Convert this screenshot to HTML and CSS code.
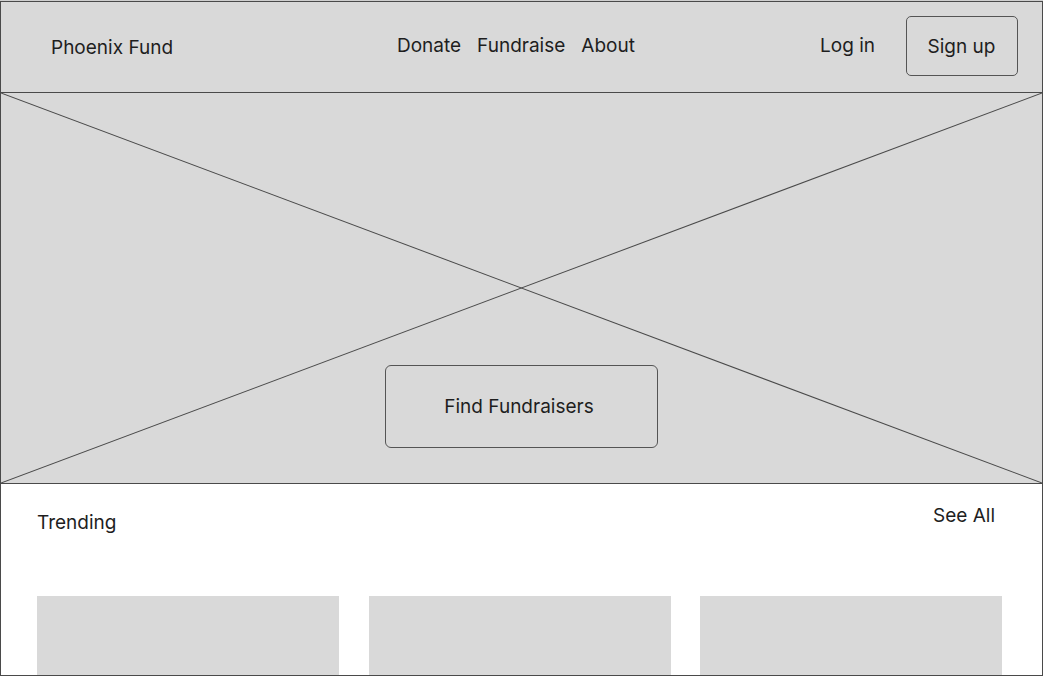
FILE: index.html
```html
<!DOCTYPE html>
<html lang="en">
<head>
<meta charset="utf-8">
<title>Phoenix Fund</title>
<link rel="stylesheet" href="styles.css">
</head>
<body>
<div class="frame">
  <header class="topbar">
    <div class="logo">Phoenix Fund</div>
    <nav class="nav">
      <a class="nav-link" href="#">Donate</a>
      <a class="nav-link" href="#">Fundraise</a>
      <a class="nav-link" href="#">About</a>
    </nav>
    <div class="auth">
      <a class="login" href="#">Log in</a>
      <a class="signup" href="#">Sign up</a>
    </div>
  </header>
  <section class="hero">
    <svg class="hero-x" viewBox="0 0 100 100" preserveAspectRatio="none" aria-hidden="true">
      <line x1="0" y1="0" x2="100" y2="100" vector-effect="non-scaling-stroke"/>
      <line x1="100" y1="0" x2="0" y2="100" vector-effect="non-scaling-stroke"/>
    </svg>
    <a class="hero-btn" href="#">Find Fundraisers</a>
  </section>
  <section class="trending">
    <div class="trending-head">
      <h2 class="trending-title">Trending</h2>
      <a class="see-all" href="#">See All</a>
    </div>
    <div class="cards">
      <div class="card"></div>
      <div class="card"></div>
      <div class="card"></div>
    </div>
  </section>
</div>
</body>
</html>
```
FILE: styles.css
```css
* { box-sizing: border-box; }
html, body { margin: 0; padding: 0; background: #cfcfcf; }
body {
  font-family: Inter, "Noto Sans", sans-serif;
  color: #1e1e1e;
  overflow: hidden;
  padding-top: 1px;
}
a { color: inherit; text-decoration: none; }

.frame {
  width: 1043px;
  height: 675px;
  border: 1px solid #4a4a4a;
  background: #ffffff;
  overflow: hidden;
  display: flex;
  flex-direction: column;
}

.topbar {
  height: 91px;
  flex: none;
  background: #d9d9d9;
  border-bottom: 1px solid #4a4a4a;
  display: grid;
  grid-template-columns: 346px auto 1fr;
  align-items: center;
  padding: 0 24px 0 50px;
  font-size: 19px;
}
.logo { margin-top: 0; }
.nav { display: flex; gap: 16px; margin-bottom: 4px; }
.auth {
  display: flex;
  align-items: center;
  justify-content: flex-end;
  gap: 31px;
  margin-bottom: 2px;
}
.login { margin-bottom: 1px; }
.signup {
  width: 112px;
  height: 60px;
  border: 1px solid #555;
  border-radius: 5px;
  display: flex;
  align-items: center;
  justify-content: center;
  padding-right: 1px;
}

.hero {
  position: relative;
  height: 391px;
  flex: none;
  background: #d9d9d9;
  border-bottom: 1px solid #4a4a4a;
  display: flex;
  flex-direction: column;
  align-items: center;
  justify-content: flex-end;
  padding-bottom: 35px;
}
.hero-x {
  position: absolute;
  left: 0; top: 0;
  width: 100%; height: 100%;
}
.hero-x line { stroke: #4a4a4a; stroke-width: 1; }
.hero-btn {
  position: relative;
  width: 273px;
  height: 83px;
  border: 1px solid #555;
  border-radius: 6px;
  display: flex;
  align-items: center;
  justify-content: center;
  padding-right: 5px;
  font-size: 19px;
}

.trending { padding: 0 46px 0 36px; }
.trending-head {
  display: flex;
  justify-content: space-between;
  align-items: flex-start;
  height: 112px;
}
.trending-title {
  margin: 27px 0 0 0;
  font-size: 19px;
  font-weight: 400;
}
.see-all { margin-top: 20px; font-size: 19px; margin-right: 1px; }
.cards {
  display: grid;
  grid-template-columns: repeat(3, 302px);
  column-gap: 29.5px;
}
.card { height: 200px; background: #d9d9d9; }
```
